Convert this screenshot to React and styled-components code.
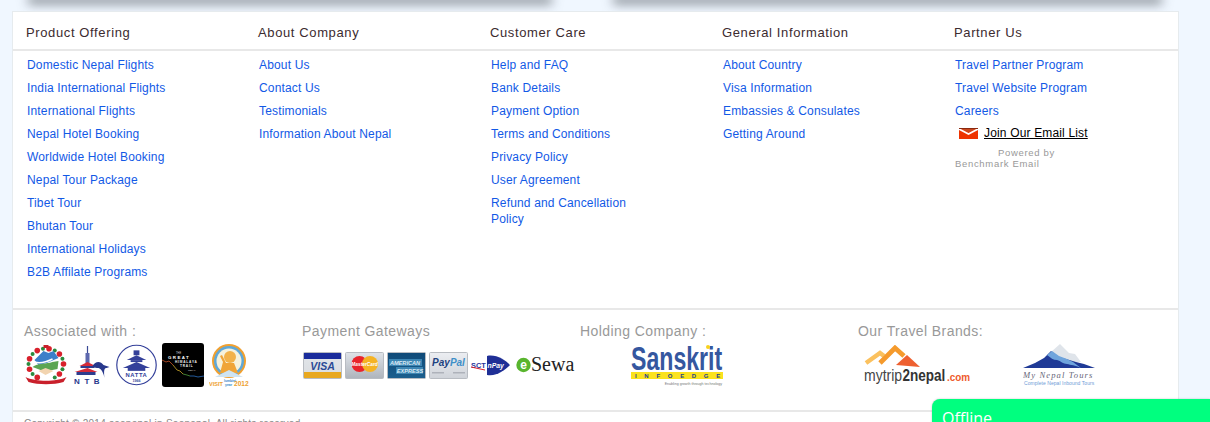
import React from "react";
import styled, { createGlobalStyle } from "styled-components";

const GlobalStyle = createGlobalStyle`
  html, body {
    margin: 0;
    padding: 0;
    height: 422px;
    overflow: hidden;
    background: #f0f7ff;
    font-family: "Liberation Sans", Arial, sans-serif;
  }
`;

const Page = styled.div`
  position: relative;
  height: 422px;
  overflow: hidden;
`;

const TopShadows = styled.div`
  display: flex;
  height: 11px;
  padding-left: 32px;
  gap: 69px;
`;

const ShadowPanel = styled.div`
  height: 0;
  width: ${(p) => p.$width}px;
  box-shadow: 0 0 11px 4px rgba(50, 56, 64, 0.58);
`;

const Footer = styled.div`
  margin-left: 12px;
  width: 1167px;
  box-sizing: border-box;
  background: #fff;
  border: 1px solid #e6ebee;
  border-bottom: none;
  position: relative;
`;

const Columns = styled.div`
  display: grid;
  grid-template-columns: repeat(5, 232px);
  padding-left: 13px;
  height: 296px;
  border-bottom: 2px solid #e8e8e8;
`;

const Column = styled.div`
  display: flex;
  flex-direction: column;
`;

const ColumnTitle = styled.h4`
  margin: 0;
  height: 37px;
  font-size: 13px;
  font-weight: normal;
  letter-spacing: 0.62px;
  line-height: 42px;
  color: #3c2b2f;
`;

const HeaderRule = styled.div`
  position: absolute;
  left: 0;
  right: 0;
  top: 37px;
  height: 2px;
  background: #e8e8e8;
`;

const LinkList = styled.ul`
  list-style: none;
  margin: 0;
  padding: 8px 0 0 1px;
  width: 150px;
`;

const LinkItem = styled.li`
  font-size: 12px;
  line-height: 16px;
  margin-bottom: 7px;
  letter-spacing: 0.16px;
  color: #1259e6;
`;

const EmailRow = styled.div`
  display: flex;
  align-items: center;
  gap: 6px;
  padding-left: 4px;
  margin-top: -1px;
  height: 16px;
  font-size: 12px;
  letter-spacing: 0.16px;
  color: #000;
  text-decoration: underline;
`;

const PoweredBy = styled.div`
  font-size: 9.5px;
  line-height: 11px;
  margin-top: 6px;
  letter-spacing: 0.68px;
  color: #999;
  width: 120px;
`;

const PoweredFirst = styled.div`
  padding-left: 43px;
`;

const Partners = styled.div`
  display: grid;
  grid-template-columns: repeat(4, 278px);
  padding-left: 11px;
  height: 100px;
  border-bottom: 2px solid #e8e8e8;
`;

const PartnerGroup = styled.div`
  display: flex;
  flex-direction: column;
`;

const PartnerTitle = styled.div`
  font-size: 14px;
  line-height: 16px;
  padding-top: 13px;
  letter-spacing: 0.42px;
  color: #999;
`;

const LogoRow = styled.div`
  display: flex;
  align-items: center;
  height: 44px;
  margin-top: 4px;
  padding-left: ${(p) => p.$indent || 0}px;
  gap: ${(p) => p.$gap || 0}px;
`;

const Copyright = styled.div`
  padding: 6px 0 0 11px;
  font-size: 10px;
  letter-spacing: 0.25px;
  color: #888;
`;

const OfflineTab = styled.div`
  position: absolute;
  left: 932px;
  top: 399px;
  width: 278px;
  height: 40px;
  box-sizing: border-box;
  padding: 9px 0 0 10px;
  background: #00ff7f;
  border-radius: 8px 0 0 0;
  box-shadow: 0 0 2px rgba(0, 0, 0, 0.25);
  color: #fff;
  font-family: "Open Sans", sans-serif;
  font-size: 16px;
  line-height: 20px;
`;

const columns = [
  {
    title: "Product Offering",
    links: [
      "Domestic Nepal Flights",
      "India International Flights",
      "International Flights",
      "Nepal Hotel Booking",
      "Worldwide Hotel Booking",
      "Nepal Tour Package",
      "Tibet Tour",
      "Bhutan Tour",
      "International Holidays",
      "B2B Affilate Programs",
    ],
  },
  {
    title: "About Company",
    links: ["About Us", "Contact Us", "Testimonials", "Information About Nepal"],
  },
  {
    title: "Customer Care",
    links: [
      "Help and FAQ",
      "Bank Details",
      "Payment Option",
      "Terms and Conditions",
      "Privacy Policy",
      "User Agreement",
      "Refund and Cancellation Policy",
    ],
  },
  {
    title: "General Information",
    links: ["About Country", "Visa Information", "Embassies & Consulates", "Getting Around"],
  },
  {
    title: "Partner Us",
    links: ["Travel Partner Program", "Travel Website Program", "Careers"],
    email: true,
  },
];

const EmailIcon = () => (
  <svg width="19" height="11" viewBox="0 0 19 11">
    <rect width="19" height="11" fill="#ee3300" />
    <path d="M0 0h19L9.5 4.5z" fill="#c9481e" />
    <path d="M0 1l9.5 5L19 1" fill="none" stroke="#fff" strokeWidth="1.6" />
    <rect width="19" height="1" fill="#8a2a10" />
  </svg>
);

// ring of flowers round the coat of arms, open at the bottom
const wreath = Array.from({ length: 16 }, (_, i) => {
  const a = (Math.PI * (-240 + i * 20)) / 180;
  return { x: 21.5 + 17.5 * Math.cos(a), y: 19 + 15.5 * Math.sin(a) };
});

const Emblem = () => (
  <svg width="44" height="40" viewBox="0 0 43 40">
    {wreath.map((f, i) => (
      <circle key={i} cx={f.x} cy={f.y} r={i % 2 ? 2 : 2.8} fill={i % 2 ? "#2b8a3e" : "#d8212c"} />
    ))}
    <path d="M10 15l9-9 5 2 5-2 5 7-12 5-8 2z" fill="#3c7fc9" />
    <path d="M8 22c5-4 14-3 20-5l6-1-1 8-10 2-7-1z" fill="#5ba552" />
    <path d="M10 17c6 2 12 0 18-3" fill="none" stroke="#fff" strokeWidth="1.4" />
    <path d="M14 26l7-3 8 3-8 4z" fill="#f2d4b0" />
    <path d="M1 32c10 5 31 5 41 0l-3 5c-10 3-25 3-35 0z" fill="#c9202b" />
    <path d="M19 0h5v3h-5z" fill="#c9202b" />
  </svg>
);

const NtbLogo = () => (
  <svg width="38" height="40" viewBox="0 0 37 40">
    <rect x="13.4" y="1" width="1.2" height="7" fill="#3a4a96" />
    <rect x="12" y="8" width="4" height="10" fill="#5d68ae" />
    <path d="M6 21l8-4 8 4z" fill="#d42a3a" />
    <rect x="7" y="21" width="14" height="2" fill="#2e3c8e" />
    <path d="M1 27l13-4 10 4z" fill="#d42a3a" />
    <rect x="3" y="27" width="19" height="3" fill="#2e3c8e" />
    <path d="M19 21c3-5 8-5 11-1l6 2-3 1c-2 0-3 2-2 10-1-5-3-9-6-10-2 0-4 0-6-2z" fill="#28388c" />
    <text x="0.5" y="39" fontFamily="Liberation Sans" fontWeight="700" fontSize="8" letterSpacing="4.6" fill="#28388c">NTB</text>
  </svg>
);

const NattaLogo = () => (
  <svg width="41" height="42" viewBox="0 0 42 42">
    <circle cx="21" cy="21" r="20.2" fill="#fff" stroke="#34409a" strokeWidth="1.2" />
    <rect x="18" y="6" width="6" height="5" fill="#34409a" />
    <path d="M11 16l10-5 10 5z" fill="#34409a" />
    <rect x="15" y="16" width="12" height="2" fill="#34409a" />
    <path d="M7 24l14-6 14 6z" fill="#34409a" />
    <rect x="12" y="24" width="18" height="3" fill="#34409a" />
    <text x="21" y="33" textAnchor="middle" fontFamily="Liberation Sans" fontWeight="700" fontSize="6" letterSpacing="0.6" fill="#34409a">NATTA</text>
    <text x="21" y="38" textAnchor="middle" fontFamily="Liberation Sans" fontWeight="700" fontSize="3.8" fill="#34409a">1966</text>
  </svg>
);

const TrailLogo = () => (
  <svg width="42" height="44" viewBox="0 0 42 44">
    <rect width="42" height="44" rx="3" fill="#000" />
    <text x="14" y="11" fontFamily="Liberation Sans" fontSize="2.6" fill="#ddd">THE</text>
    <text x="6" y="15.5" fontFamily="Liberation Sans" fontWeight="700" fontSize="4.4" letterSpacing="1.4" fill="#fff">GREAT</text>
    <text x="13" y="20" fontFamily="Liberation Sans" fontWeight="700" fontSize="3.2" letterSpacing="0.8" fill="#eee">HIMALAYA</text>
    <text x="18" y="24" fontFamily="Liberation Sans" fontWeight="700" fontSize="3.2" letterSpacing="0.8" fill="#eee">TRAIL</text>
    <text x="26" y="27.5" fontFamily="Liberation Sans" fontSize="2.4" fill="#ccc">NEPAL</text>
    <path d="M0 17l4 2 3-1 4 4" fill="none" stroke="#c8542a" strokeWidth="0.8" />
    <path d="M11 22l4 5 3 1 3 3" fill="none" stroke="#c7a52a" strokeWidth="0.8" />
    <path d="M21 31l4 1 3 1" fill="none" stroke="#4e9a3c" strokeWidth="0.8" />
    <path d="M28 33l4 0 4 1 6-1" fill="none" stroke="#2c6fc0" strokeWidth="0.8" />
  </svg>
);

const LumbiniLogo = () => (
  <svg width="40" height="43" viewBox="0 0 40 43">
    <circle cx="20" cy="17" r="17" fill="#f0a030" />
    <circle cx="20" cy="17" r="15" fill="#5fa8d8" />
    <circle cx="20" cy="17" r="12.5" fill="#f6f2dc" />
    <circle cx="21" cy="13" r="6" fill="#f2b24a" />
    <path d="M11 29l3-11-3-6 2-1 4 8h8l4 10z" fill="#f0a538" />
    <path d="M6 33l14-7 14 7z" fill="#cfe4f2" />
    <text x="0" y="42" fontFamily="Liberation Sans" fontWeight="700" fontSize="5.6" fill="#eea02e">VISIT</text>
    <text x="15" y="38" fontFamily="Liberation Sans" fontWeight="700" fontSize="3.4" fill="#2f86c6">lumbini</text>
    <text x="16" y="42" fontFamily="Liberation Sans" fontWeight="700" fontSize="3.4" fill="#2f86c6">year</text>
    <text x="25" y="42" fontFamily="Liberation Sans" fontWeight="700" fontSize="6.6" fill="#eea02e">2012</text>
  </svg>
);

const CardFrame = ({ children, top = "#e8eaee", bottom = "#c8ccd2" }) => (
  <svg width="39" height="27" viewBox="0 0 39 27">
    <defs>
      <linearGradient id={top.slice(1) + "g"} x1="0" y1="0" x2="0" y2="1">
        <stop offset="0" stopColor={top} />
        <stop offset="1" stopColor={bottom} />
      </linearGradient>
    </defs>
    <rect x="0.5" y="0.5" width="38" height="26" rx="1" fill={`url(#${top.slice(1)}g)`} stroke="#b8bcc2" />
    {children}
  </svg>
);

const VisaCard = () => (
  <CardFrame top="#e2e6ea" bottom="#d9dce0">
    <rect x="1" y="1" width="37" height="6" fill="#1a2c9c" />
    <rect x="1" y="20" width="37" height="6" fill="#e8a820" />
    <text x="19.5" y="17.5" textAnchor="middle" fontFamily="Liberation Sans" fontWeight="700" fontStyle="italic" fontSize="10.5" fill="#2a4a96">VISA</text>
  </CardFrame>
);

const MasterCard = () => (
  <CardFrame top="#dfe3e8" bottom="#aeb4bc">
    <circle cx="14.5" cy="12" r="8" fill="#e8242c" />
    <circle cx="25" cy="12" r="8" fill="#f5b324" />
    <text x="19.5" y="14" textAnchor="middle" fontFamily="Liberation Sans" fontWeight="700" fontStyle="italic" fontSize="4.8" fill="#fff">MasterCard</text>
  </CardFrame>
);

const AmexCard = () => (
  <CardFrame top="#0f4a78" bottom="#1c5f8e">
    <rect x="2" y="7" width="33" height="7" fill="#3d86b4" />
    <rect x="9" y="15" width="27" height="7" fill="#3d86b4" />
    <text x="18" y="12.6" textAnchor="middle" fontFamily="Liberation Sans" fontWeight="700" fontStyle="italic" fontSize="5.6" fill="#dcebf5">AMERICAN</text>
    <text x="23" y="20.6" textAnchor="middle" fontFamily="Liberation Sans" fontWeight="700" fontStyle="italic" fontSize="5.6" fill="#dcebf5">EXPRESS</text>
  </CardFrame>
);

const PaypalCard = () => (
  <CardFrame top="#eceef2" bottom="#cfd3d9">
    <text x="19.5" y="14" textAnchor="middle" fontFamily="Liberation Sans" fontWeight="700" fontStyle="italic" fontSize="10">
      <tspan fill="#21417f">Pay</tspan>
      <tspan fill="#3f8fc8">Pal</tspan>
    </text>
    <rect x="3" y="20" width="12" height="1.5" fill="#aeb2ba" />
    <rect x="24" y="20" width="12" height="1.5" fill="#aeb2ba" />
  </CardFrame>
);

const SctLogo = () => (
  <svg width="39" height="21" viewBox="0 0 39 21">
    <path d="M16 1c9-2 18 4 23 9-5 5-14 12-23 10z" fill="#1f2f96" />
    <text x="0" y="12.5" fontFamily="Liberation Sans" fontWeight="700" fontSize="7.4" fill="#28359c">SCT</text>
    <path d="M0 12l14 3" stroke="#d8232c" strokeWidth="1" />
    <text x="16.5" y="13" fontFamily="Liberation Sans" fontWeight="700" fontStyle="italic" fontSize="6.8" fill="#fff">nPay</text>
  </svg>
);

const EsewaLogo = () => (
  <svg width="62" height="18" viewBox="0 0 62 18">
    <circle cx="10.5" cy="9" r="7.2" fill="#59b52e" />
    <text x="10.5" y="13" textAnchor="middle" fontFamily="Liberation Sans" fontWeight="700" fontSize="12" fill="#fff">e</text>
    <text x="18" y="15" fontFamily="Liberation Serif" fontSize="20" fill="#222">Sewa</text>
  </svg>
);

const SanskritLogo = () => (
  <svg width="92" height="41" viewBox="0 0 92 41">
    <g transform="scale(0.68 1)">
      <text x="0" y="25" fontFamily="Liberation Sans" fontWeight="700" fontSize="34" fill="#35579f">Sanskrit</text>
    </g>
    <circle cx="77" cy="2" r="2" fill="#f8d21c" />
    <rect x="0" y="27" width="92" height="7" fill="#fbe21e" />
    <text x="4" y="33" fontFamily="Liberation Sans" fontWeight="700" fontSize="6" letterSpacing="7.7" fill="#243f8c">INFOEDGE</text>
    <text x="91" y="39.5" textAnchor="end" fontFamily="Liberation Sans" fontSize="3.6" fill="#777">Enabling growth through technology</text>
  </svg>
);

const MytripLogo = () => (
  <svg width="108" height="41" viewBox="0 0 108 41">
    <path d="M3 18l14-10 4 3" fill="none" stroke="#fbc15e" strokeWidth="4.5" />
    <path d="M17 18l15-15 9 8" fill="none" stroke="#f59a2c" strokeWidth="4.8" />
    <path d="M33 20l11-10 13 12z" fill="#ee6030" />
    <g transform="translate(1 36) scale(0.85 1)">
      <text fontFamily="Liberation Sans" fontSize="16.5" fill="#444">mytrip</text>
    </g>
    <g transform="translate(39.5 36) scale(0.82 1)">
      <text fontFamily="Liberation Sans" fontWeight="700" fontSize="16.5" fill="#333">2nepal</text>
    </g>
    <g transform="translate(84 36) scale(0.9 1)">
      <text fontFamily="Liberation Sans" fontWeight="700" fontSize="11" fill="#ee5a2c">.com</text>
    </g>
  </svg>
);

const MyNepalLogo = () => (
  <svg width="72" height="43" viewBox="0 0 72 43">
    <path d="M28 8l9-8 9 9 6 1 6 8H30z" fill="#dfe4ea" />
    <path d="M0 24l12-5 9-5 7-7 7 6 8 2 10 3 8 2 11 4z" fill="#1f3a96" />
    <path d="M24 11l5-4 7 5 8 3 6 3 8 6c-6-3-10-3-14-4-4 0-6-3-10-4-4 0-6-2-10-5z" fill="#6fa4dc" />
    <text x="0" y="33.5" fontFamily="Liberation Serif" fontStyle="italic" fontSize="8.6" letterSpacing="1.1" fill="#667">My Nepal Tours</text>
    <text x="1" y="40.5" fontFamily="Liberation Sans" fontSize="5" letterSpacing="0.05" fill="#6f9bd6">Complete Nepal Inbound Tours</text>
  </svg>
);

const App = () => (
  <Page>
    <GlobalStyle />
    <TopShadows>
      <ShadowPanel $width={516} />
      <ShadowPanel $width={541} />
    </TopShadows>
    <Footer>
      <HeaderRule />
      <Columns>
        {columns.map((col) => (
          <Column key={col.title}>
            <ColumnTitle>{col.title}</ColumnTitle>
            <LinkList>
              {col.links.map((link) => (
                <LinkItem key={link}>{link}</LinkItem>
              ))}
              {col.email ? (
                <>
                  <EmailRow>
                    <EmailIcon />
                    Join Our Email List
                  </EmailRow>
                  <PoweredBy>
                    <PoweredFirst>Powered by</PoweredFirst>
                    Benchmark Email
                  </PoweredBy>
                </>
              ) : null}
            </LinkList>
          </Column>
        ))}
      </Columns>
      <Partners>
        <PartnerGroup>
          <PartnerTitle>Associated with :</PartnerTitle>
          <LogoRow $gap={5}>
            <Emblem />
            <NtbLogo />
            <NattaLogo />
            <TrailLogo />
            <LumbiniLogo />
          </LogoRow>
        </PartnerGroup>
        <PartnerGroup>
          <PartnerTitle>Payment Gateways</PartnerTitle>
          <LogoRow $indent={1} $gap={3}>
            <VisaCard />
            <MasterCard />
            <AmexCard />
            <PaypalCard />
            <SctLogo />
            <EsewaLogo />
          </LogoRow>
        </PartnerGroup>
        <PartnerGroup>
          <PartnerTitle>Holding Company :</PartnerTitle>
          <LogoRow $indent={51}>
            <SanskritLogo />
          </LogoRow>
        </PartnerGroup>
        <PartnerGroup>
          <PartnerTitle>Our Travel Brands:</PartnerTitle>
          <LogoRow $indent={5} $gap={52}>
            <MytripLogo />
            <MyNepalLogo />
          </LogoRow>
        </PartnerGroup>
      </Partners>
      <Copyright>Copyright © 2014 seenepal.in Seenepal. All rights reserved</Copyright>
    </Footer>
    <OfflineTab>Offline</OfflineTab>
  </Page>
);

export default App;
